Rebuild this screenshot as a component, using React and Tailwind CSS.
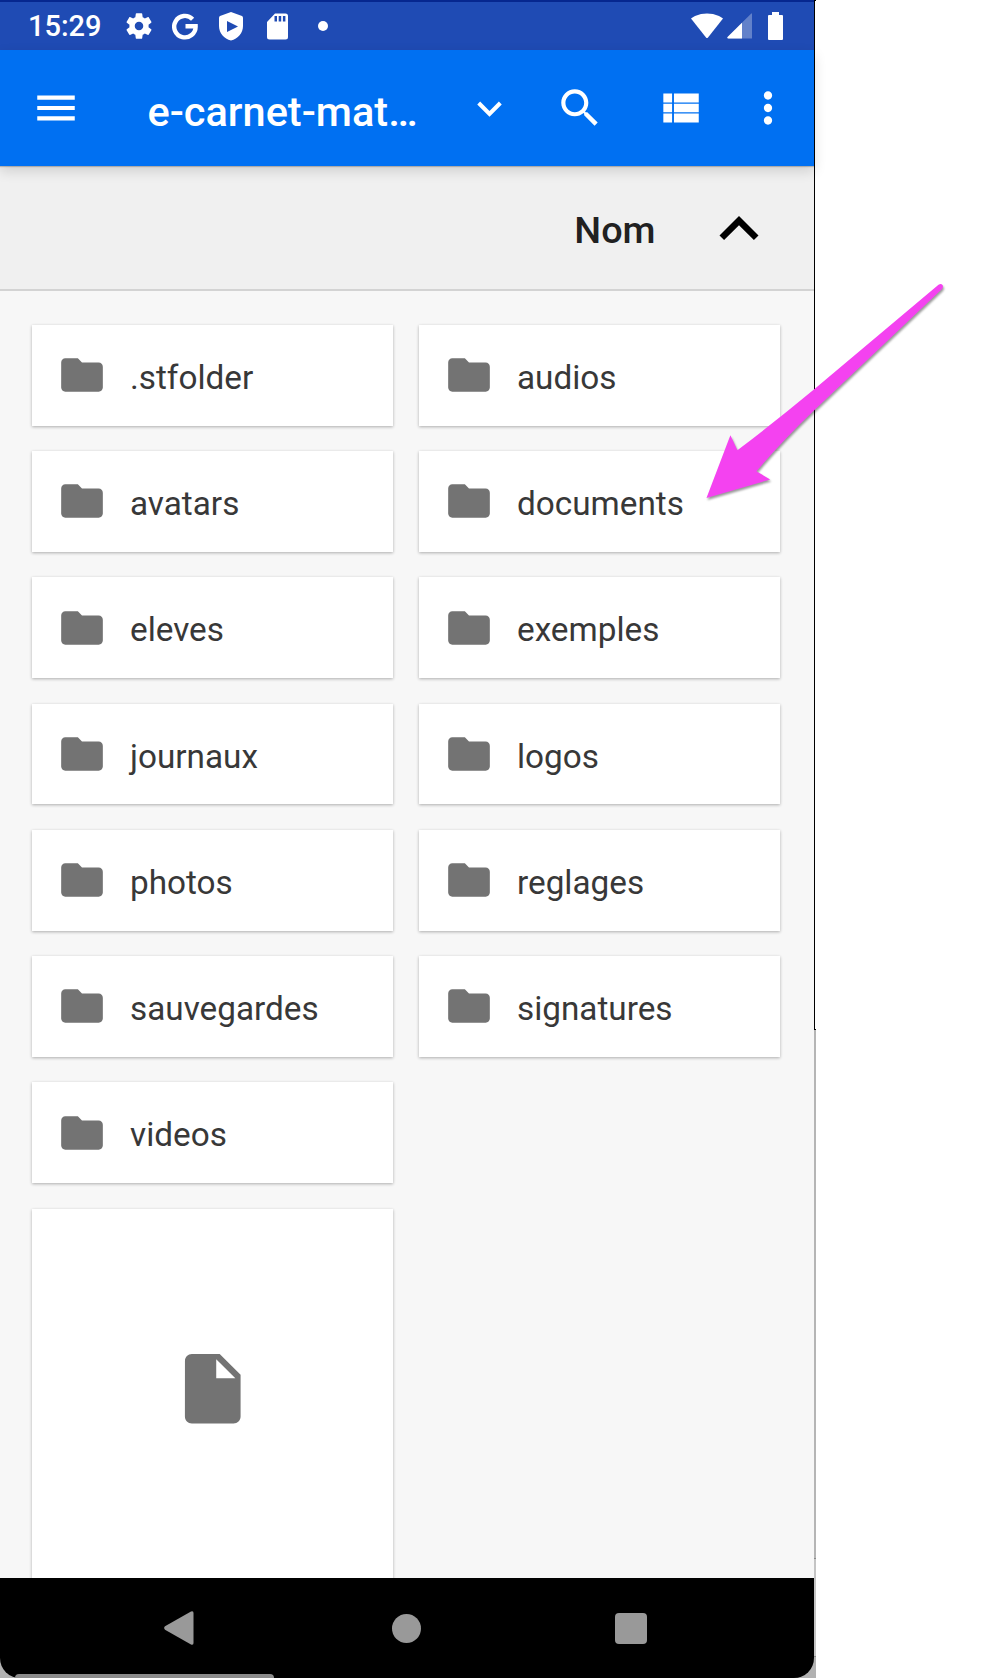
const folders = [
  ".stfolder", "audios", "avatars", "documents", "eleves", "exemples",
  "journaux", "logos", "photos", "reglages", "sauvegardes", "signatures", "videos",
];

function Icon({ d, className }) {
  return (
    <svg viewBox="0 0 24 24" fill="currentColor" className={`shrink-0 ${className}`}>
      <path d={d} />
    </svg>
  );
}

const GEAR =
  "M19.14 12.94c.04-.3.06-.61.06-.94 0-.32-.02-.64-.07-.94l2.03-1.58c.18-.14.23-.41.12-.61l-1.92-3.32c-.12-.22-.37-.29-.59-.22l-2.39.96c-.5-.38-1.03-.7-1.62-.94l-.36-2.54c-.04-.24-.24-.41-.48-.41h-3.84c-.24 0-.43.17-.47.41l-.36 2.54c-.59.24-1.13.57-1.62.94l-2.39-.96c-.22-.08-.47 0-.59.22L2.74 8.87c-.12.21-.08.47.12.61l2.03 1.58c-.05.3-.09.63-.09.94s.02.64.07.94l-2.03 1.58c-.18.14-.23.41-.12.61l1.92 3.32c.12.22.37.29.59.22l2.39-.96c.5.38 1.03.7 1.62.94l.36 2.54c.05.24.24.41.48.41h3.84c.24 0 .44-.17.47-.41l.36-2.54c.59-.24 1.13-.56 1.62-.94l2.39.96c.22.08.47 0 .59-.22l1.92-3.32c.12-.22.07-.47-.12-.61l-2.01-1.58zM12 15.2c-1.77 0-3.2-1.43-3.2-3.2s1.43-3.2 3.2-3.2 3.2 1.43 3.2 3.2-1.43 3.2-3.2 3.2z";
const MENU = "M3 18h18v-2H3v2zm0-5h18v-2H3v2zm0-7v2h18V6H3z";
const EXPAND_MORE = "M16.59 8.59L12 13.17 7.41 8.59 6 10l6 6 6-6z";
const EXPAND_LESS = "M12 8l-6 6 1.41 1.41L12 10.83l4.59 4.58L18 14z";
const SEARCH =
  "M15.5 14h-.79l-.28-.27C15.41 12.59 16 11.11 16 9.5 16 5.91 13.09 3 9.5 3S3 5.91 3 9.5 5.91 16 9.5 16c1.61 0 3.09-.59 4.23-1.57l.27.28v.79l5 4.99L20.49 19l-4.99-5zm-6 0C7.01 14 5 11.99 5 9.5S7.01 5 9.5 5 14 7.01 14 9.5 11.99 14 9.5 14z";
const VIEW_LIST =
  "M4 14h4.2v-4H4v4zm0 5h4.2v-4.4H4V19zM4 9.3h4.2V5H4v4.3zm5.1 4.7H21v-4H9.1v4zm0 5H21v-4.4H9.1V19zM9.1 5v4.3H21V5H9.1z";
const MORE =
  "M12 8c1.1 0 2-.9 2-2s-.9-2-2-2-2 .9-2 2 .9 2 2 2zm0 2c-1.1 0-2 .9-2 2s.9 2 2 2 2-.9 2-2-.9-2-2-2zm0 6c-1.1 0-2 .9-2 2s.9 2 2 2 2-.9 2-2-.9-2-2-2z";
const FOLDER =
  "M10 4H4c-1.1 0-1.99.9-1.99 2L2 18c0 1.1.9 2 2 2h16c1.1 0 2-.9 2-2V8c0-1.1-.9-2-2-2h-8l-2-2z";
const FILE =
  "M6 2c-1.1 0-1.99.9-1.99 2L4 20c0 1.1.89 2 1.99 2H18c1.1 0 2-.9 2-2V8l-6-6H6zm7 7V3.5L18.5 9H13z";

function StatusBar() {
  return (
    <div className="flex h-[50px] items-center border-t-2 border-[#06278f] bg-[#1f4bb4] text-white">
      <span className="mt-px ml-7 w-[74px] shrink-0 text-[29px] leading-none font-medium">15:29</span>
      <Icon d={GEAR} className="ml-[20.5px] size-8" />
      <svg viewBox="0 0 26 27" className="ml-[17px] h-[27px] w-[26px] shrink-0">
        <path d="M20.6 6.2A10.7 10.7 0 1 0 23.6 13.3H13.5" fill="none" stroke="currentColor" strokeWidth="4.4" />
      </svg>
      <svg viewBox="0 0 24 29" className="ml-[21px] h-[29px] w-6 shrink-0">
        <path d="M12 0 23 4Q24 4.4 24 6v8C24 21 19 27 12 28.5 5 27 0 21 0 14V6Q0 4.4 1 4ZM8 9v11l11-5.5Z" fill="currentColor" fillRule="evenodd" />
      </svg>
      <svg viewBox="0 0 21 27" className="ml-[24px] h-[27px] w-[21px] shrink-0">
        <path d="M8 .5H18.5A2.5 2.5 0 0 1 21 3V24a2.5 2.5 0 0 1-2.5 2.5H2.5A2.5 2.5 0 0 1 0 24V9ZM7.5 3V8.5H10V3ZM11.7 3V8.5H14.2V3ZM15.9 3V8.5H18.4V3Z" fill="currentColor" fillRule="evenodd" />
      </svg>
      <span className="ml-[30.5px] size-[9.5px] rounded-full bg-white" />
      <svg viewBox="0 0 32 26" className="ml-auto h-[26px] w-8 shrink-0">
        <path d="M0 5.5Q1 4.5 4 3C12-.3 20-.3 28 3Q31 4.5 32 5.5L17 24.5Q16 25.7 15 24.5Z" fill="currentColor" />
      </svg>
      <svg viewBox="0 0 26 26" className="ml-1 size-[26px] shrink-0">
        <path d="M25 .5V25.5H1.5Q-.5 25.2.8 23.7L24 .8Q25 0 25 .5Z" fill="currentColor" opacity=".3" />
        <path d="M15 9.7V25.5H1.5Q-.5 25.2.8 23.7Z" fill="currentColor" />
      </svg>
      <svg viewBox="0 0 15 28" className="mr-[31px] ml-[15px] h-7 w-[15px] shrink-0">
        <path d="M4 0h7v3h3q1 0 1 1v23q0 1-1 1H1q-1 0-1-1V4q0-1 1-1h3Z" fill="currentColor" />
      </svg>
    </div>
  );
}

function AppBar() {
  return (
    <div className="relative z-10 flex h-[116px] items-center bg-[#0070f2] text-white shadow-[0_1px_1px_rgba(0,0,0,0.2),0_5px_12px_rgba(0,0,0,0.14)]">
      <Icon d={MENU} className="ml-[31px] size-[50px]" />
      <span className="mt-2 ml-[66.5px] w-[317px] text-[41.5px] leading-none font-medium whitespace-nowrap">e-carnet-mat…</span>
      <Icon d={EXPAND_MORE} className="size-[49px]" />
      <Icon d={SEARCH} className="ml-[41px] size-[50px]" />
      <Icon d={VIEW_LIST} className="ml-[50.5px] size-[50px]" />
      <Icon d={MORE} className="ml-[37.5px] size-[50px]" />
    </div>
  );
}

function FolderCard({ name }) {
  return (
    <div className="flex h-[100.75px] items-center bg-white pl-[24.5px] shadow-[0_1px_3px_rgba(0,0,0,0.3)]">
      <Icon d={FOLDER} className="size-[50px] text-[#737373]" />
      <span className="mt-[5px] ml-[23.5px] text-[33.3px] leading-none text-[#383838]">{name}</span>
    </div>
  );
}

function NavBar() {
  return (
    <div className="relative h-[100px] shrink-0 bg-[#b2b2b2]">
      <div className="flex h-[99.5px] items-center rounded-b-[20px] bg-black pt-px text-[#999]">
        <svg viewBox="0 0 30 34" className="ml-[164px] h-[34px] w-[30px]">
          <path d="M27 .5Q29.5-.5 29.5 2V32Q29.5 34.5 27 33.5L1 18.7Q-.7 17 1 15.3Z" fill="currentColor" />
        </svg>
        <span className="ml-[197.5px] size-[29.5px] rounded-full bg-[#999]" />
        <span className="ml-[194px] size-[31.5px] rounded-[4px] bg-[#999]" />
      </div>
      <div className="absolute bottom-0 left-[15px] h-1 w-[259px] rounded-t-[5px] bg-[#8c8c8c]" />
    </div>
  );
}

export default function App() {
  return (
    <div className="relative flex h-[1678px] w-[984px] overflow-hidden bg-white font-[Roboto,sans-serif]">
      <div className="flex w-[814px] shrink-0 flex-col bg-[#f7f7f7]">
        <StatusBar />
        <AppBar />
        <div className="flex h-[125px] shrink-0 items-center border-b-2 border-[#d3d3d3] bg-[#f0f0f0]">
          <span className="mt-1.5 ml-auto text-[37.8px] leading-none font-medium text-[#212121]">Nom</span>
          <Icon d={EXPAND_LESS} className="mt-[3px] mr-[36px] ml-[44.5px] size-[78px] text-black" />
        </div>
        <div className="grid min-h-0 flex-1 auto-rows-max grid-cols-2 gap-x-[26px] gap-y-[25.5px] overflow-hidden px-8 pt-[33.75px] pr-[34px]">
          {folders.map((name) => (
            <FolderCard key={name} name={name} />
          ))}
          <div className="col-start-1 flex h-[400px] justify-center bg-white pt-[138.5px] shadow-[0_1px_3px_rgba(0,0,0,0.3)]">
            <Icon d={FILE} className="size-[83.5px] text-[#737373]" />
          </div>
        </div>
        <NavBar />
      </div>
      <div className="flex w-0.5 flex-col">
        <div className="h-[1030px] border-y border-l border-black bg-white" />
        <div className="h-[529px] border-b border-[#8a8a8a] bg-[#b5b5b5]" />
        <div className="h-[98px] border-b border-[#8a8a8a] bg-[#c4c4c4]" />
        <div className="flex-1 bg-[#b2b2b2]" />
      </div>
      <svg viewBox="0 0 984 600" className="absolute top-0 left-0 h-[600px] w-[984px] drop-shadow-[1px_2px_1px_rgba(0,0,0,0.4)]">
        <path d="M706.5 498 730.4 435.3 737.4 450.3Q776 421 814.5 389L938.5 284.800Q941 283 942.5 285 943.8 287 941.5 289.500L814.5 410Q784 439 756.4 471.3L770.2 479.5Z" fill="#f442f0" />
      </svg>
    </div>
  );
}
